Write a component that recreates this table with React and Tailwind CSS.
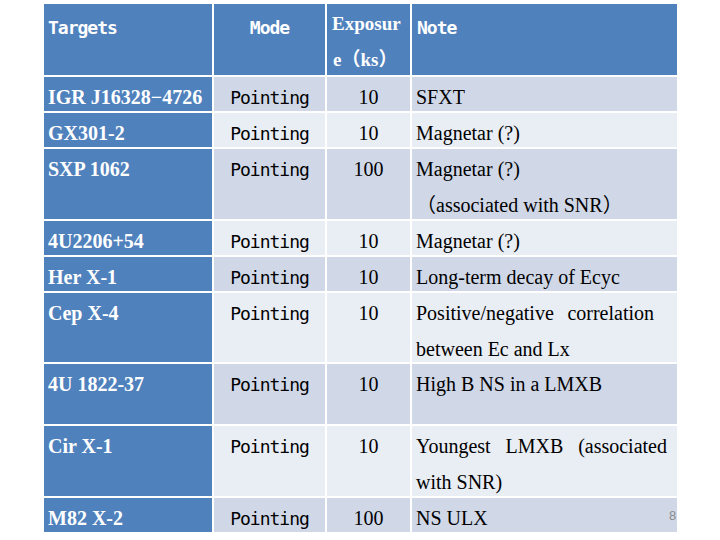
const rows = [
  { name: "IGR J16328−4726", exp: "10", note: ["SFXT"], h: "h-[34px]" },
  { name: "GX301-2", exp: "10", note: ["Magnetar (?)"], h: "h-[34px]" },
  { name: "SXP 1062", exp: "100", note: ["Magnetar (?)", "（associated with SNR）"], h: "h-[70px]" },
  { name: "4U2206+54", exp: "10", note: ["Magnetar (?)"], h: "h-[34px]" },
  { name: "Her X-1", exp: "10", note: ["Long-term decay of Ecyc"], h: "h-[34px]" },
  { name: "Cep X-4", exp: "10", note: [["Positive/negative", "correlation"], "between Ec and Lx"], w: "w-[238px]", h: "h-[69px]" },
  { name: "4U 1822-37", exp: "10", note: ["High B NS in a LMXB"], h: "h-[60px]" },
  { name: "Cir X-1", exp: "10", note: [["Youngest", "LMXB", "(associated"], "with SNR)"], w: "w-[251px]", h: "h-[70px]" },
  { name: "M82 X-2", exp: "100", note: ["NS ULX"], h: "h-[34px]" },
];

const serif = "font-['Liberation_Serif','Noto_Sans_CJK_SC',serif]";
const mono = "font-['DejaVu_Sans_Mono',monospace]";

function NoteLine({ line, w }) {
  if (Array.isArray(line)) {
    return (
      <div className={`flex justify-between ${w}`}>
        {line.map((word) => (
          <span key={word}>{word}</span>
        ))}
      </div>
    );
  }
  return <div className="whitespace-nowrap">{line}</div>;
}

export default function App() {
  return (
    <div className="relative w-[720px] h-[540px] bg-white overflow-hidden">
      <div className="ml-[44px] pt-[4px] grid grid-cols-[168px_111px_83px_265px] gap-[2px]">
        {/* header */}
        <div className={`h-[71px] bg-[#4f81bd] text-white ${mono} font-bold text-[18px] tracking-[-1px] leading-[36px] pt-[6px] pl-[4px]`}>
          Targets
        </div>
        <div className={`h-[71px] bg-[#4f81bd] text-white ${mono} font-bold text-[18px] tracking-[-1px] leading-[36px] pt-[6px] text-center`}>
          Mode
        </div>
        <div className={`h-[71px] bg-[#4f81bd] text-white ${serif} font-bold text-[19px] leading-[36px] pt-[2px] pl-[5px] whitespace-nowrap`}>
          <div>Exposur</div>
          <div className="pl-[1px]">e（ks）</div>
        </div>
        <div className={`h-[71px] bg-[#4f81bd] text-white ${mono} font-bold text-[18px] tracking-[-1px] leading-[36px] pt-[6px] pl-[5px]`}>
          Note
        </div>

        {rows.map((r, i) => {
          const bg = i % 2 === 0 ? "bg-[#d0d8e8]" : "bg-[#e9edf4]";
          return [
            <div key={r.name + "a"} className={`${r.h} bg-[#4f81bd] text-white ${serif} font-bold text-[20px] leading-[36px] pt-[2px] pl-[4px] whitespace-nowrap`}>
              {r.name}
            </div>,
            <div key={r.name + "b"} className={`${r.h} ${bg} text-black ${mono} text-[18px] tracking-[-1px] leading-[36px] pt-[3px] text-center`}>
              Pointing
            </div>,
            <div key={r.name + "c"} className={`${r.h} ${bg} text-black ${serif} text-[20px] leading-[36px] pt-[2px] text-center`}>
              {r.exp}
            </div>,
            <div key={r.name + "d"} className={`${r.h} ${bg} text-black ${serif} text-[20px] leading-[36px] pt-[2px] pl-[4px]`}>
              {r.note.map((line, j) => (
                <NoteLine key={j} line={line} w={r.w} />
              ))}
            </div>,
          ];
        })}
      </div>
      <div className="absolute left-[669px] top-[506px] text-[13px] text-[#8c8c8c] font-['Liberation_Sans',sans-serif]">
        8
      </div>
    </div>
  );
}
